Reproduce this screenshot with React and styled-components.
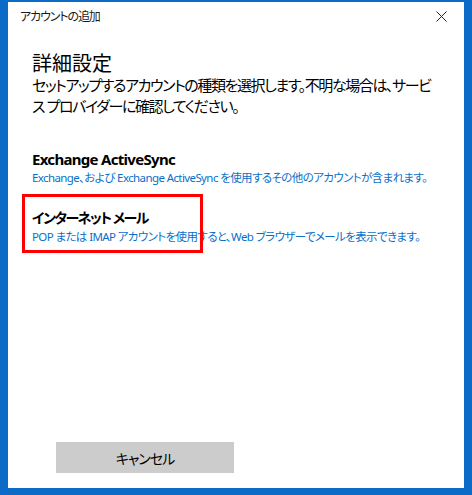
import React from "react"
import styled, { createGlobalStyle } from "styled-components"

const GlobalStyle = createGlobalStyle`
  html, body {
    margin: 0;
    padding: 0;
    background: #0c6bc7;
  }
  * {
    box-sizing: border-box;
  }
`

const Window = styled.div`
  width: 472px;
  height: 495px;
  display: flex;
  flex-direction: column;
  background: #fff;
  border-style: solid;
  border-color: #0c6bc7;
  border-width: 2px 8px 7px 8px;
  font-family: "Noto Sans", "Noto Sans CJK JP", sans-serif;
  font-feature-settings: "palt";
  color: #000;
`
const TitleBar = styled.div`
  height: 28px;
  display: flex;
  align-items: center;
  justify-content: space-between;
  padding-left: 12px;
`
const Caption = styled.span`
  font-size: 12px;
  letter-spacing: -1.1px;
  color: #1a1a1a;
`
const CloseButton = styled.button`
  width: 46px;
  height: 28px;
  border: 0;
  padding: 0;
  background: transparent;
  display: flex;
  align-items: center;
  justify-content: center;
`
const Body = styled.div`
  flex: 1;
  display: flex;
  flex-direction: column;
  padding: 0 24px;
`
const Heading = styled.h1`
  margin: 23px 0 0;
  font-size: 20px;
  font-weight: 400;
  line-height: 22px;
`
const Lead = styled.p`
  margin: 0;
  font-size: 15px;
  line-height: 21px;
  letter-spacing: -1.4px;
  white-space: nowrap;
`
const Option = styled.div`
  position: relative;
  margin-top: ${(p) => p.$gap}px;
`
const OptionTitle = styled.div`
  font-size: ${(p) => p.$size}px;
  letter-spacing: ${(p) => p.$spacing}px;
  font-weight: 700;
  line-height: 20px;
`
const OptionText = styled.div`
  font-size: 11.5px;
  letter-spacing: -0.6px;
  line-height: 18px;
  color: #0a6fc9;
  white-space: nowrap;
`
const Highlight = styled.div`
  position: absolute;
  left: -10px;
  top: -14px;
  width: 181px;
  height: 59px;
  border: 3px solid #f00;
`
const Footer = styled.div`
  margin-top: auto;
  padding: 0 0 15px 48px;
`
const CancelButton = styled.button`
  width: 178px;
  height: 31px;
  border: 0;
  background: #ccc;
  font-family: inherit;
  font-feature-settings: "palt";
  font-size: 14px;
  letter-spacing: -1px;
  color: #000;
`

const CloseIcon = () => (
  <svg width="11" height="11" viewBox="0 0 11 11">
    <path d="M0.5 0.5 L10.5 10.5 M10.5 0.5 L0.5 10.5" stroke="#222" strokeWidth="1" />
  </svg>
)

const App = () => (
  <>
    <GlobalStyle />
    <Window>
      <TitleBar>
        <Caption>アカウントの追加</Caption>
        <CloseButton aria-label="閉じる">
          <CloseIcon />
        </CloseButton>
      </TitleBar>
      <Body>
        <Heading>詳細設定</Heading>
        <Lead>
          セットアップするアカウントの種類を選択します。不明な場合は、サービ
          <br />
          ス プロバイダーに確認してください。
        </Lead>
        <Option $gap={32}>
          <OptionTitle $size={15} $spacing={-0.7}>Exchange ActiveSync</OptionTitle>
          <OptionText>Exchange、および Exchange ActiveSync を使用するその他のアカウントが含まれます。</OptionText>
        </Option>
        <Option $gap={21}>
          <Highlight />
          <OptionTitle $size={14} $spacing={-1.5}>インターネット メール</OptionTitle>
          <OptionText>POP または IMAP アカウントを使用すると、Web ブラウザーでメールを表示できます。</OptionText>
        </Option>
      </Body>
      <Footer>
        <CancelButton>キャンセル</CancelButton>
      </Footer>
    </Window>
  </>
)

export default App
